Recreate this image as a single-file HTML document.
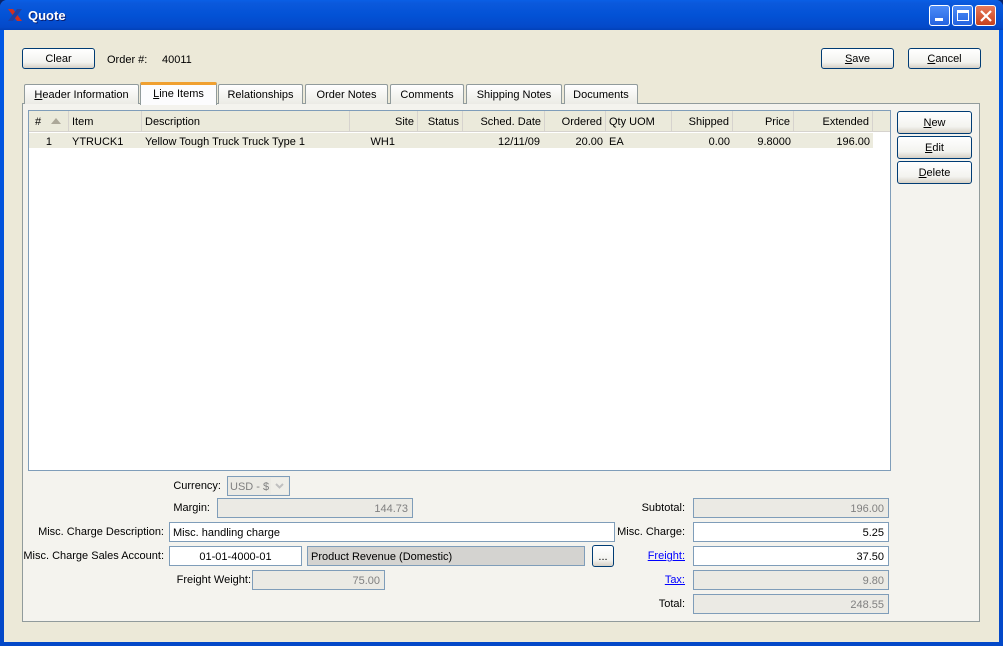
<!DOCTYPE html>
<html><head><meta charset="utf-8"><style>
*{box-sizing:border-box;margin:0;padding:0}
body{width:1003px;height:646px;overflow:hidden;font-family:"Liberation Sans",sans-serif;font-size:11px;color:#000;background:#0a246a;position:relative}
.a{position:absolute}
#win{left:0;top:0;width:1003px;height:646px;background:linear-gradient(#0058e6,#0348c8);border-radius:7px 7px 0 0}
#title{left:0;top:0;width:1003px;height:30px;background:linear-gradient(#0a5fe6,#0b59dc 10%,#0352d6 50%,#0449c9 90%,#0240b8);border-radius:7px 7px 0 0}
#body{left:4px;top:30px;width:995px;height:612px;background:#ece9d8}
.btn{position:absolute;border:1px solid #003c74;border-radius:3px;background:linear-gradient(#fff,#f3f3ef 70%,#d6d0c5);text-align:center;font-size:11px;line-height:21px}
.tab{position:absolute;top:84px;height:20px;border:1px solid #919b9c;border-bottom:none;background:linear-gradient(#fff,#ecebe5);text-align:center;line-height:21px;border-radius:2px 2px 0 0}
.fld{position:absolute;height:20px;border:1px solid #7f9db9;background:#ebeae4;color:#808080;padding:0 4px;line-height:20px;text-align:right}
.w{background:#fff;color:#000}
.lbl{position:absolute;line-height:20px;text-align:right}
.hd{position:absolute;top:0;height:21px;line-height:23px;border-right:1px solid #d6d3ce;padding:0 3px}
.c{position:absolute;top:23px;height:15px;line-height:16px;padding:0 3px}
u{text-decoration:underline}
a{color:#00f;text-decoration:underline}
</style></head><body>
<div id="win" class="a"></div>
<div id="title" class="a">
  <svg class="a" style="left:8px;top:9px" width="14" height="12"><path d="M0 0L5 0L14 12L9 12Z" fill="#d03020"/><path d="M14 0L9 0L0 12L5 12Z" fill="#2040a0"/></svg>
  <div class="a" style="left:28px;top:8px;color:#fff;font-weight:bold;font-size:13px;text-shadow:1px 1px #0a1e6e">Quote</div>
  <div class="a" style="left:929px;top:5px;width:21px;height:21px;border:1px solid #fff;border-radius:3px;background:linear-gradient(#4c8cf8,#2463e0)"><div class="a" style="left:5px;top:12px;width:8px;height:3px;background:#fff"></div></div>
  <div class="a" style="left:952px;top:5px;width:21px;height:21px;border:1px solid #fff;border-radius:3px;background:linear-gradient(#4c8cf8,#2463e0)"><div class="a" style="left:4px;top:4px;width:12px;height:11px;border:1px solid #fff;border-top-width:3px"></div></div>
  <div class="a" style="left:975px;top:5px;width:21px;height:21px;border:1px solid #fff;border-radius:3px;background:linear-gradient(#e87a5a,#c6401c)"><svg class="a" style="left:4px;top:4px" width="12" height="12"><path d="M1 1L11 11M11 1L1 11" stroke="#fff" stroke-width="2.2"/></svg></div>
</div>
<div id="body" class="a"></div>
<div class="btn" style="left:22px;top:48px;width:73px;height:21px">Clear</div>
<div class="a" style="left:107px;top:54px">Order #:</div>
<div class="a" style="left:162px;top:54px">40011</div>
<div class="btn" style="left:821px;top:48px;width:73px;height:21px"><u>S</u>ave</div>
<div class="btn" style="left:908px;top:48px;width:73px;height:21px"><u>C</u>ancel</div>

<div class="a" style="left:22px;top:103px;width:958px;height:519px;border:1px solid #919b9c;background:#f4f3ee"></div>
<div class="tab" style="left:24px;width:115px"><u>H</u>eader Information</div>
<div class="tab" style="left:140px;top:82px;height:23px;width:77px;background:#fcfcfe;border-top:3px solid #f0a030;border-color:#919b9c;border-top-color:#f0a030;line-height:19px;z-index:2"><u>L</u>ine Items</div>
<div class="tab" style="left:218px;width:85px">Relationships</div>
<div class="tab" style="left:305px;width:83px">Order Notes</div>
<div class="tab" style="left:390px;width:74px">Comments</div>
<div class="tab" style="left:466px;width:96px">Shipping Notes</div>
<div class="tab" style="left:564px;width:74px">Documents</div>

<div class="a" style="left:28px;top:110px;width:863px;height:361px;border:1px solid #7f9db9;background:#fff">
  <div class="a" style="left:0;top:0;width:861px;height:21px;background:#ebeadb;border-bottom:1px solid #d6d3ce"></div>
  <div class="hd" style="left:0;width:40px">&nbsp;#</div>
  <svg class="a" style="left:22px;top:7px" width="10" height="6"><path d="M0 6L5 0L10 6Z" fill="#aca899"/></svg>
  <div class="hd" style="left:40px;width:73px">Item</div>
  <div class="hd" style="left:113px;width:208px">Description</div>
  <div class="hd" style="left:321px;width:68px;text-align:right">Site</div>
  <div class="hd" style="left:389px;width:45px;text-align:right">Status</div>
  <div class="hd" style="left:434px;width:82px;text-align:right">Sched. Date</div>
  <div class="hd" style="left:516px;width:61px;text-align:right">Ordered</div>
  <div class="hd" style="left:577px;width:66px">Qty UOM</div>
  <div class="hd" style="left:643px;width:61px;text-align:right">Shipped</div>
  <div class="hd" style="left:704px;width:61px;text-align:right">Price</div>
  <div class="hd" style="left:765px;width:79px;text-align:right">Extended</div>
  <div class="a" style="left:0;top:22px;width:844px;height:15px;background:#ecebde"></div>
  <div class="c" style="left:0;width:26px;text-align:right">1</div>
  <div class="c" style="left:40px">YTRUCK1</div>
  <div class="c" style="left:113px">Yellow Tough Truck Truck Type 1</div>
  <div class="c" style="left:321px;width:48px;text-align:right">WH1</div>
  <div class="c" style="left:434px;width:80px;text-align:right">12/11/09</div>
  <div class="c" style="left:516px;width:61px;text-align:right">20.00</div>
  <div class="c" style="left:577px">EA</div>
  <div class="c" style="left:643px;width:61px;text-align:right">0.00</div>
  <div class="c" style="left:704px;width:61px;text-align:right">9.8000</div>
  <div class="c" style="left:765px;width:79px;text-align:right">196.00</div>
</div>
<div class="btn" style="left:897px;top:111px;width:75px;height:23px;line-height:23px"><u>N</u>ew</div>
<div class="btn" style="left:897px;top:136px;width:75px;height:23px;line-height:23px"><u>E</u>dit</div>
<div class="btn" style="left:897px;top:161px;width:75px;height:23px;line-height:23px"><u>D</u>elete</div>

<div class="lbl" style="left:100px;top:476px;width:121px">Currency:</div>
<div class="fld" style="left:227px;top:476px;width:63px;text-align:left;padding-left:2px">USD - $</div>
<div class="a" style="left:271px;top:478px;width:17px;height:16px;background:#efeee8"><svg class="a" style="left:4px;top:5px" width="9" height="6"><path d="M1 1L4.5 4.5L8 1" stroke="#c0c0c0" stroke-width="2" fill="none"/></svg></div>
<div class="lbl" style="left:100px;top:498px;width:110px">Margin:</div>
<div class="fld" style="left:217px;top:498px;width:196px">144.73</div>
<div class="lbl" style="left:20px;top:522px;width:144px">Misc. Charge Description:</div>
<div class="fld w" style="left:169px;top:522px;width:446px;text-align:left;padding-left:3px">Misc. handling charge</div>
<div class="lbl" style="left:20px;top:546px;width:144px">Misc. Charge Sales Account:</div>
<div class="fld w" style="left:169px;top:546px;width:133px;text-align:center">01-01-4000-01</div>
<div class="fld" style="left:307px;top:546px;width:278px;background:#d4d3d0;color:#000;text-align:left;padding-left:3px">Product Revenue (Domestic)</div>
<div class="btn" style="left:592px;top:545px;width:22px;height:22px;line-height:22px">...</div>
<div class="lbl" style="left:100px;top:570px;width:151px">Freight Weight:</div>
<div class="fld" style="left:252px;top:570px;width:133px">75.00</div>

<div class="lbl" style="left:600px;top:498px;width:85px">Subtotal:</div>
<div class="fld" style="left:693px;top:498px;width:196px">196.00</div>
<div class="lbl" style="left:600px;top:522px;width:85px">Misc. Charge:</div>
<div class="fld w" style="left:693px;top:522px;width:196px">5.25</div>
<div class="lbl" style="left:600px;top:546px;width:85px"><a>Freight:</a></div>
<div class="fld w" style="left:693px;top:546px;width:196px">37.50</div>
<div class="lbl" style="left:600px;top:570px;width:85px"><a>Tax:</a></div>
<div class="fld" style="left:693px;top:570px;width:196px">9.80</div>
<div class="lbl" style="left:600px;top:594px;width:85px">Total:</div>
<div class="fld" style="left:693px;top:594px;width:196px">248.55</div>
</body></html>
